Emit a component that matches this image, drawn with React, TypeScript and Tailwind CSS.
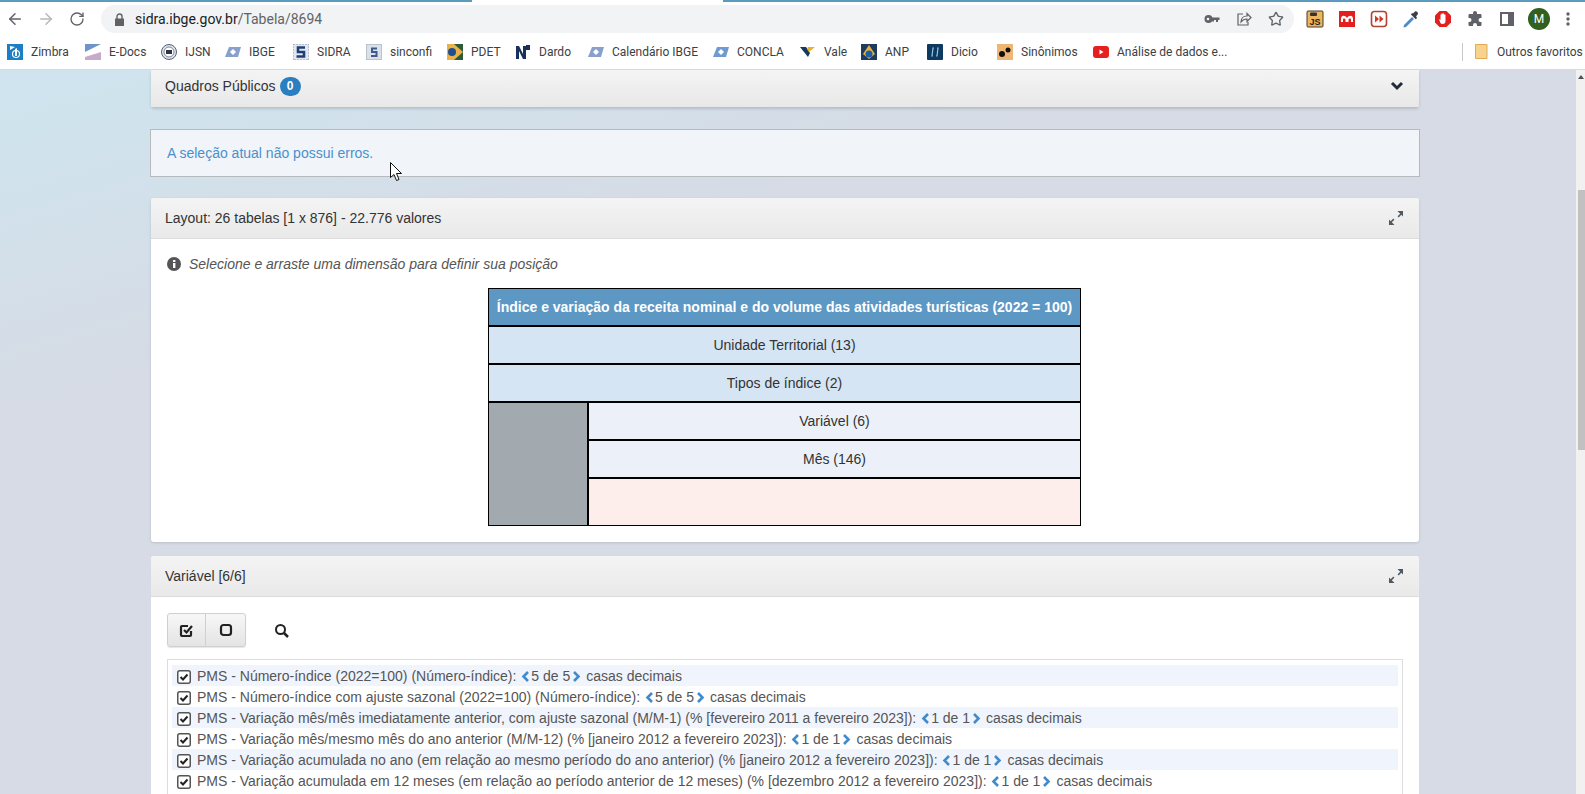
import React from "react";
import { ArrowLeft, ArrowRight, RotateCw, Star } from "lucide-react";

const FONT = "font-['Liberation_Sans',Arial,sans-serif]";

const Ibge = ({ c = "#8aa0cc" }: { c?: string }) => (
  <svg width="16" height="16" viewBox="0 0 16 16">
    <path d="M4 3h12l-3 10H0z" fill={c} />
    <path d="M5 8l3-3 3 3-3 3z" fill="#fff" />
  </svg>
);

const bookmarks: { label: string; w: string; icon: React.ReactNode }[] = [
  { label: "Zimbra", w: "w-[78px]", icon: <svg width="16" height="16" viewBox="0 0 16 16"><rect width="16" height="16" fill="#1c7ec4" /><path d="M8 5l2-1v8H8zM3 2l5 1-5 3z" fill="#fff" /><circle cx="9" cy="10" r="3.500" fill="none" stroke="#fff" strokeWidth="1.200" /></svg> },
  { label: "E-Docs", w: "w-[76px]", icon: <svg width="16" height="16" viewBox="0 0 16 16"><path d="M0 0h16L0 8z" fill="#6f94c9" /><path d="M16 8v8H0v-3z" fill="#c7a9c9" /></svg> },
  { label: "IJSN", w: "w-[64px]", icon: <svg width="16" height="16" viewBox="0 0 16 16"><circle cx="8" cy="8" r="7.500" fill="#dfe3ea" stroke="#55607a" strokeWidth="1" /><circle cx="8" cy="8" r="5" fill="#fff" stroke="#7d88a0" /><rect x="5" y="6" width="6" height="4" fill="#334" /></svg> },
  { label: "IBGE", w: "w-[68px]", icon: <Ibge /> },
  { label: "SIDRA", w: "w-[73px]", icon: <svg width="16" height="16" viewBox="0 0 16 16"><rect width="16" height="16" fill="#e3e8f0" stroke="#8a97ab" strokeDasharray="2 1" /><path d="M12 3.500H5v4.500h6v4.500H3.500" fill="none" stroke="#1f3f74" strokeWidth="2.600" /></svg> },
  { label: "sinconfi", w: "w-[81px]", icon: <svg width="16" height="16" viewBox="0 0 16 16"><rect x="0.500" y="0.500" width="15" height="15" fill="#dbe1ea" stroke="#b9c2cf" /><path d="M11 4.500H6v3.500h4.500V12H5" fill="none" stroke="#3c5a8d" strokeWidth="2" /></svg> },
  { label: "PDET", w: "w-[68px]", icon: <svg width="16" height="16" viewBox="0 0 16 16"><rect width="16" height="16" fill="#2e5a3a" /><path d="M0 0h7l9 8-9 8H0z" fill="#e8b14a" /><circle cx="5" cy="8" r="4" fill="#1f4e91" /></svg> },
  { label: "Dardo", w: "w-[73px]", icon: <svg width="16" height="16" viewBox="0 0 16 16"><path d="M1 15V2h3l4 8V2h3v13H8L4 7v8z" fill="#17305c" /><path d="M11 1h4v5h-4z" fill="#17305c" /></svg> },
  { label: "Calendário IBGE", w: "w-[125px]", icon: <Ibge /> },
  { label: "CONCLA", w: "w-[87px]", icon: <Ibge c="#6f9bd1" /> },
  { label: "Vale", w: "w-[61px]", icon: <svg width="16" height="16" viewBox="0 0 16 16"><path d="M0 3h6l4 6-2 4z" fill="#14395f" /><path d="M9 8l6-5h-7l-1 2z" fill="#ecb02e" /></svg> },
  { label: "ANP", w: "w-[66px]", icon: <svg width="16" height="16" viewBox="0 0 16 16"><rect width="16" height="16" fill="#1c3b5e" /><path d="M8 1l6 9-6 5-6-5z" fill="#e3b23c" /><circle cx="8" cy="10" r="3.500" fill="#1c5ea8" /></svg> },
  { label: "Dicio", w: "w-[70px]", icon: <svg width="16" height="16" viewBox="0 0 16 16"><rect width="16" height="16" rx="1" fill="#0f3a5f" /><path d="M7 4H6l-1 8h1M10 4h1l-1 8H9" fill="none" stroke="#8fc4ee" strokeWidth="1.200" /></svg> },
  { label: "Sinônimos", w: "w-[96px]", icon: <svg width="16" height="16" viewBox="0 0 16 16"><rect width="16" height="16" fill="#efb573" /><circle cx="5" cy="10" r="3" fill="#111" /><circle cx="11" cy="6" r="2.500" fill="#111" /></svg> },
  { label: "Análise de dados e...", w: "w-[140px]", icon: <svg width="16" height="16" viewBox="0 0 16 16"><rect y="2" width="16" height="12" rx="3" fill="#e5201f" /><path d="M6.500 5.500v5l4-2.500z" fill="#fff" /></svg> },
];

const Head = ({ title, icon }: { title: React.ReactNode; icon: React.ReactNode }) => (
  <div className="flex h-[41px] items-center justify-between rounded-t-[3px] border-b border-[#dcdcdc] bg-gradient-to-b from-[#f4f4f4] to-[#e9e9e9] pl-[14px] pr-[15px] text-[14px] text-[#333]">
    <span>{title}</span>
    {icon}
  </div>
);

const Expand = () => (
  <svg width="16" height="16" viewBox="0 0 16 16" fill="#4d5a66">
    <path d="M9.500 1H15v5.500l-1.700-1.700-2.600 2.600-1.100-1.100 2.600-2.600zM6.500 15H1V9.500l1.700 1.700 2.600-2.600 1.100 1.100-2.600 2.600z" />
  </svg>
);

const Dec = ({ v }: { v: string }) => (
  <>
    <svg className="mx-[1px] inline-block align-[-1px]" width="9" height="11" viewBox="0 0 9 11"><path d="M7 1L2.500 5.500 7 10" fill="none" stroke="#428bca" strokeWidth="2.600" /></svg>
    {v}
    <svg className="ml-[2px] mr-[1px] inline-block align-[-1px]" width="9" height="11" viewBox="0 0 9 11"><path d="M2 1l4.500 4.500L2 10" fill="none" stroke="#428bca" strokeWidth="2.600" /></svg>
    <span className="ml-[4px]">casas decimais</span>
  </>
);

const rows = [
  ["PMS - Número-índice (2022=100) (Número-índice): ", "5 de 5"],
  ["PMS - Número-índice com ajuste sazonal (2022=100) (Número-índice): ", "5 de 5"],
  ["PMS - Variação mês/mês imediatamente anterior, com ajuste sazonal (M/M-1) (% [fevereiro 2011 a fevereiro 2023]): ", "1 de 1"],
  ["PMS - Variação mês/mesmo mês do ano anterior (M/M-12) (% [janeiro 2012 a fevereiro 2023]): ", "1 de 1"],
  ["PMS - Variação acumulada no ano (em relação ao mesmo período do ano anterior) (% [janeiro 2012 a fevereiro 2023]): ", "1 de 1"],
  ["PMS - Variação acumulada em 12 meses (em relação ao período anterior de 12 meses) (% [dezembro 2012 a fevereiro 2023]): ", "1 de 1"],
];

export default function App() {
  return (
    <div className={`flex h-[794px] w-[1585px] flex-col overflow-hidden bg-white ${FONT}`}>
      {/* tab strip sliver */}
      <div className="flex h-[3px] shrink-0 border-b border-white">
        <div className="w-[472px] bg-[#5b9bbd]" />
        <div className="w-[251px] bg-white" />
        <div className="flex-1 bg-[#5b9bbd]" />
      </div>
      {/* toolbar */}
      <div className="flex h-[32px] shrink-0 items-center bg-white font-['Roboto',sans-serif]">
        <div className="flex w-[101px] items-center pl-[6px] text-[#5f6368]">
          <ArrowLeft size={18} strokeWidth={2} />
          <ArrowRight size={18} strokeWidth={2} className="ml-[13px] text-[#b5b8bc]" />
          <RotateCw size={16} strokeWidth={2} className="ml-[14px]" />
        </div>
        <div className="flex h-[28px] w-[1193px] items-center rounded-full bg-[#f1f3f4] pl-[13px] pr-[10px]">
          <svg width="11" height="13" viewBox="0 0 11 13" fill="#5f6368"><path d="M1 5.500h9V13H1z" /><path d="M3 6V3.500a2.500 2.500 0 0 1 5 0V6" fill="none" stroke="#5f6368" strokeWidth="1.400" /></svg>
          <span className="ml-[10px] text-[14px] text-[#5f6368]"><span className="text-[#202124]">sidra.ibge.gov.br</span>/Tabela/8694</span>
          <div className="ml-auto flex items-center gap-[16px] text-[#5f6368]">
            <svg width="16" height="16" viewBox="0 0 16 16" fill="#5f6368"><circle cx="4.500" cy="8" r="4" /><circle cx="4" cy="8" r="1.300" fill="#f1f3f4" /><path d="M7 6.500h8.500V9h-1.500v2h-2V9H10v1.500H8z" /></svg>
            <svg width="16" height="16" viewBox="0 0 16 16" fill="none" stroke="#5f6368" strokeWidth="1.200"><path d="M7 3H2v11h10v-3" /><path d="M5 11c0-4 3-6 6-6V2.500l4 4-4 4V8c-3 0-4.500 1-6 3z" /></svg>
            <Star size={16} strokeWidth={2} />
          </div>
        </div>
        <div className="ml-[12px] flex items-center gap-[14px]">
          <svg width="18" height="18" viewBox="0 0 18 18"><rect x="1" y="1" width="16" height="16" rx="1" fill="#eeb560" stroke="#4a3a20" strokeWidth="1" /><rect x="4" y="2.500" width="7" height="3.500" rx="1" fill="#333" /><text x="3.500" y="15" fontSize="9" fontWeight="700" fill="#222" fontFamily="Liberation Sans">JS</text></svg>
          <svg width="18" height="18" viewBox="0 0 18 18"><rect x="1" y="1" width="16" height="16" fill="#e3201f" /><path d="M3 12V9c0-4 4-4 6-1 2-3 6-3 6 1v3h-2V9.500c0-1.500-2-1.500-2.500 0V12h-3V9.500C7 8 5 8 5 9.500V12z" fill="#fff" /></svg>
          <svg width="18" height="18" viewBox="0 0 18 18"><rect x="1.500" y="1.500" width="15" height="15" rx="3" fill="#fff" stroke="#b5412f" strokeWidth="1.600" /><path d="M5 5.500v7l4-3.500zM9.500 5.500v7l4-3.500z" fill="#d9341f" /></svg>
          <svg width="18" height="18" viewBox="0 0 18 18"><path d="M2 15l8-8 2 2-8 8-2.500.5z" fill="#4d8ac9" /><path d="M9 4.500l5 5 1-2-1-1 2-2.500c0-2-1.500-3-3-2.500L11 3.500l-1-.5z" fill="#3a3f46" /></svg>
          <svg width="18" height="18" viewBox="0 0 18 18"><path d="M5.500 1h7L17 5.500v7L12.500 17h-7L1 12.500v-7z" fill="#e3201f" /><path d="M5 9l1.500 1V5c0-1 1-1 1 0V4c0-1 1-1 1 0v0c0-1 1.500-1 1.500 0v1c0-1 1.500-1 1.500 0v6c0 2-1 3-3 3-1.500 0-2-1-2.500-2z" fill="#fff" /></svg>
          <svg width="18" height="18" viewBox="0 0 18 18" fill="#5f6368"><path d="M7 3a2 2 0 0 1 4 0v1h3.500a1 1 0 0 1 1 1v3h-1a2 2 0 0 0 0 4h1v3a1 1 0 0 1-1 1H11v-1a2 2 0 0 0-4 0v1H3.500a1 1 0 0 1-1-1v-3h1a2 2 0 0 0 0-4h-1V5a1 1 0 0 1 1-1H7z" /></svg>
          <div className="flex w-[18px] justify-center">
            <div className="h-[14px] w-[14px] border-[2px] border-r-[6px] border-[#5f6368]" />
          </div>
        </div>
        <div className="ml-[12px] flex h-[22px] w-[22px] items-center justify-center rounded-full bg-[#31601f] text-[12px] text-white">M</div>
        <svg className="ml-[16px]" width="4" height="14" viewBox="0 0 4 14" fill="#5f6368"><circle cx="2" cy="2" r="1.700" /><circle cx="2" cy="7" r="1.700" /><circle cx="2" cy="12" r="1.700" /></svg>
      </div>
      {/* bookmarks */}
      <div className="flex h-[35px] shrink-0 items-center border-b border-[#d9d9d9] bg-white pb-[1px] pl-[7px] font-['Roboto',sans-serif] text-[12px] text-[#3c4043]">
        {bookmarks.map((b) => (
          <div key={b.label} className={`flex shrink-0 items-center gap-[8px] ${b.w}`}>
            {b.icon}
            <span className="whitespace-nowrap">{b.label}</span>
          </div>
        ))}
        <div className="ml-[229px] h-[18px] w-px shrink-0 bg-[#c8c8c8]" />
        <svg className="ml-[12px] shrink-0" width="13" height="15" viewBox="0 0 13 15"><path d="M.5.500h11.500v14H.5z" fill="#f7d38e" stroke="#e2ab58" /></svg>
        <span className="ml-[9px] whitespace-nowrap">Outros favoritos</span>
      </div>
      {/* page */}
      <div className="flex min-h-0 flex-1">
        <main className="relative min-w-0 flex-1 overflow-hidden bg-[linear-gradient(164deg,#cfe4ee_40px,#d6dbe5_330px)] pl-[151px] pr-[157px] text-[14px] text-[#333]">
          <section className="rounded-b-[3px] bg-white shadow-[0_2px_3px_rgba(0,0,0,0.15)]">
            <div className="flex h-[37px] items-center justify-between bg-gradient-to-b from-[#f4f4f4] to-[#e8e8e8] pb-[5px] pl-[14px] pr-[15px]">
              <span className="flex items-center gap-[4px]">
                Quadros Públicos
                <span className="flex h-[19px] w-[21px] items-center justify-center rounded-full bg-[#2a7fc1] text-[12px] font-bold text-white">0</span>
              </span>
              <svg width="14" height="10" viewBox="0 0 14 10"><path d="M2 2l5 5 5-5" fill="none" stroke="#222c38" strokeWidth="3" /></svg>
            </div>
          </section>
          <div className="-mx-px mt-[22px] flex h-[48px] items-center border border-[#b6babd] bg-[#f1f5f9] px-[16px] text-[#4a90cc]">
            A seleção atual não possui erros.
          </div>
          <section className="mt-[21px] rounded-[3px] bg-white shadow-[0_1px_3px_rgba(0,0,0,0.12)]">
            <Head title="Layout: 26 tabelas [1 x 876] - 22.776 valores" icon={<Expand />} />
            <div className="p-[16px]">
              <p className="flex h-[18px] items-center italic text-[#555]">
                <svg className="mr-[8px]" width="14" height="14" viewBox="0 0 14 14"><circle cx="7" cy="7" r="7" fill="#555" /><rect x="6" y="6" width="2.400" height="5" fill="#fff" /><rect x="6" y="3" width="2.400" height="2" fill="#fff" /></svg>
                Selecione e arraste uma dimensão para definir sua posição
              </p>
              <div className="ml-[321px] mt-[15px] w-[593px] border border-black text-center">
                <div className="flex h-[36px] items-center justify-center whitespace-nowrap bg-[#5d97c4] font-bold text-white">Índice e variação da receita nominal e do volume das atividades turísticas (2022 = 100)</div>
                <div className="flex h-[38px] items-center justify-center border-t-2 border-black bg-[#d5e5f4]">Unidade Territorial (13)</div>
                <div className="flex h-[38px] items-center justify-center border-t-2 border-black bg-[#d5e5f4]">Tipos de índice (2)</div>
                <div className="flex h-[124px] border-t-2 border-black">
                  <div className="w-[100px] border-r-2 border-black bg-[#a2a9af]" />
                  <div className="flex flex-1 flex-col">
                    <div className="flex h-[36px] items-center justify-center bg-[#ecf1f9]">Variável (6)</div>
                    <div className="flex h-[38px] items-center justify-center border-t-2 border-black bg-[#ecf1f9]">Mês (146)</div>
                    <div className="flex-1 border-t-2 border-black bg-[#fdeeec]" />
                  </div>
                </div>
              </div>
            </div>
          </section>
          <section className="mt-[14px] rounded-[3px] bg-white">
            <Head title="Variável [6/6]" icon={<Expand />} />
            <div className="px-[16px] pt-[16px]">
              <div className="flex items-center">
                <div className="flex h-[34px] w-[79px] rounded-[3px] border border-[#d0d0d0] bg-gradient-to-b from-[#f7f7f7] to-[#e4e4e4] shadow-[0_1px_1px_rgba(0,0,0,0.1)]">
                  <div className="flex w-[38px] items-center justify-center border-r border-[#d0d0d0]">
                    <svg width="15" height="15" viewBox="0 0 15 15" fill="none" stroke="#222" strokeWidth="2.200"><path d="M12 8v4a1 1 0 0 1-1 1H3a1 1 0 0 1-1-1V4a1 1 0 0 1 1-1h6" /><path d="M5 7l2.500 2.500L13 3" /></svg>
                  </div>
                  <div className="flex flex-1 items-center justify-center">
                    <svg width="14" height="14" viewBox="0 0 14 14" fill="none" stroke="#222" strokeWidth="2.200"><rect x="2" y="2" width="10" height="10" rx="2.500" /></svg>
                  </div>
                </div>
                <svg className="ml-[28px]" width="15" height="15" viewBox="0 0 15 15" fill="none" stroke="#222" strokeWidth="2"><circle cx="6.500" cy="6.500" r="4.500" /><path d="M10 10l4 4" strokeWidth="2.500" /></svg>
              </div>
              <div className="mt-[12px] h-[200px] border border-[#ddd] px-[4px] pt-[5px] text-[#555]">
                {rows.map((r, i) => (
                  <div key={i} className={`flex h-[21px] items-center whitespace-nowrap pl-[5px] pt-[2px] ${i % 2 === 0 ? "bg-[#f0f4fc]" : ""}`}>
                    <svg className="mr-[6px] shrink-0" width="14" height="14" viewBox="0 0 14 14"><rect x="0.750" y="0.750" width="12.500" height="12.500" rx="2" fill="#fff" stroke="#555" strokeWidth="1.500" /><path d="M3.500 7l2.500 2.500 4.500-5" fill="none" stroke="#222" strokeWidth="2" /></svg>
                    <span>{r[0]}<Dec v={r[1]} /></span>
                  </div>
                ))}
              </div>
            </div>
          </section>
          {/* mouse pointer over the page */}
          <svg className="absolute left-[390px] top-[92px]" width="14" height="20" viewBox="0 0 14 20"><path d="M.5.500v15l3.500-3 2.500 6 2.500-1-2.500-6h5z" fill="#fff" stroke="#111" strokeWidth="1" /></svg>
        </main>
        {/* scrollbar */}
        <div className="flex w-[9px] shrink-0 flex-col bg-[#f1f1f1]">
          <div className="mx-auto mt-[5px] h-0 w-0 border-x-[3px] border-b-[4px] border-x-transparent border-b-[#505050]" />
          <div className="ml-[2px] mt-[111px] h-[260px] bg-[#c1c1c1]" />
        </div>
      </div>
    </div>
  );
}
